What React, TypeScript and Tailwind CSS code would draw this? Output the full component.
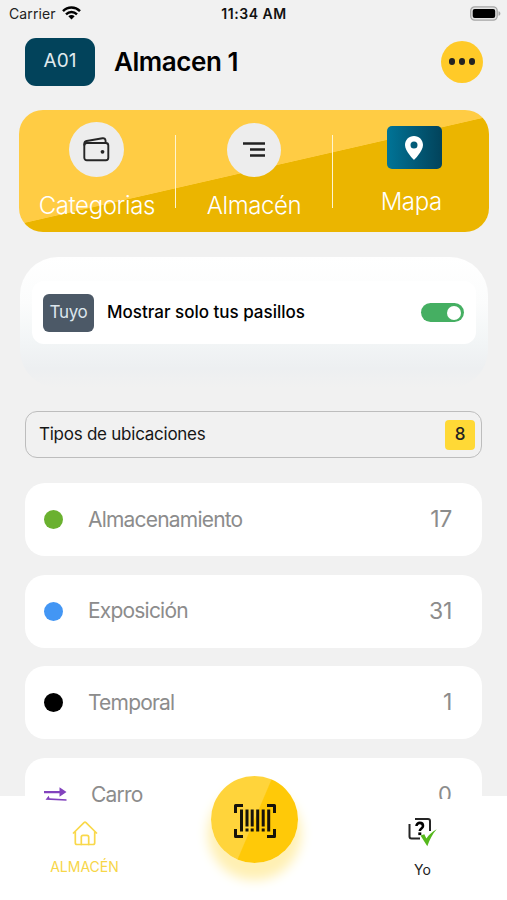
import type { ReactNode } from "react";

type LocationType = {
  name: string;
  count: number;
  color: string;
};

const LOCATION_TYPES: LocationType[] = [
  { name: "Almacenamiento", count: 17, color: "bg-[#6ab12f]" },
  { name: "Exposición", count: 31, color: "bg-[#4396f4]" },
  { name: "Temporal", count: 1, color: "bg-black" },
];

function StatusBar() {
  return (
    <div className="grid h-[26px] grid-cols-3 items-center pl-[9px] pr-[6px] text-[14px] text-[#222]">
      <div className="flex items-center gap-[6px]">
        <span className="tracking-[0.1px]">Carrier</span>
        <svg className="-mt-[1px]" width="19" height="14" viewBox="0 0 19 14" fill="none" stroke="#000" strokeWidth="2.5">
          <path d="M1 5.1C5.8.4 13.200.4 18 5.100" />
          <path d="M4 8.300c3.200-3 7.800-3 11 0" />
          <path d="M9.500 13.500 6.300 10.300c1.800-1.700 4.600-1.700 6.400 0z" fill="#000" stroke="none" />
        </svg>
      </div>
      <span className="-ml-[2px] text-center font-semibold tracking-[0.55px] text-[#111]">11:34 AM</span>
      <svg className="justify-self-end" width="31" height="15" viewBox="0 0 31 15">
        <rect x="0.700" y="0.900" width="26.500" height="13.200" rx="4" fill="#e4e4e4" stroke="#a5a5a5" strokeWidth="1.300" />
        <rect x="2.700" y="2.900" width="22.500" height="9.200" rx="2" fill="#000" />
        <path d="M28.500 5.200c2.500.7 2.500 3.900 0 4.600z" fill="#a5a5a5" />
      </svg>
    </div>
  );
}

function Header() {
  return (
    <header className="flex h-16 items-center px-[25px] pt-[7px]">
      <div className="flex h-12 w-[70px] items-center justify-center rounded-[11px] bg-[#02435b] text-[19px] text-[#e0eaee]">
        A01
      </div>
      <h1 className="ml-[19px] text-[26px] font-semibold tracking-[-0.45px] text-black">Almacen 1</h1>
      <button className="-mr-px ml-auto flex size-[42px] items-center justify-center gap-[3.500px] rounded-full bg-[#ffca28]" aria-label="Opciones">
        <span className="size-[6.500px] rounded-full bg-[#222]" />
        <span className="size-[6.500px] rounded-full bg-[#222]" />
        <span className="size-[6.500px] rounded-full bg-[#222]" />
      </button>
    </header>
  );
}

function Shortcut({ label, children }: { label: string; children: ReactNode }) {
  return (
    <div className="flex flex-1 flex-col items-center">
      {children}
      <span className="text-[24px] font-light leading-[30px] tracking-[-0.4px] text-white">{label}</span>
    </div>
  );
}

function Shortcuts() {
  return (
    <section className="mx-[19px] mt-5 flex h-[122px] w-[470px] rounded-[24px] bg-[linear-gradient(167.1deg,#ffcc44_49.600%,#ebb500_49.900%)]">
      <Shortcut label="Categorias">
        <div className="mb-[14px] mt-[12px] flex size-[55px] items-center justify-center rounded-full bg-[#ededed]">
          <svg width="27" height="25" viewBox="0 0 27 25" fill="none" stroke="#262626" strokeWidth="1.900" strokeLinejoin="round">
            <rect x="1.300" y="6" width="24" height="17.300" rx="2.500" />
            <path d="M1.300 8.500V7c0-1.500.9-2.700 2.300-3L19.500 1.300c1.700-.3 2.800.5 3 2L22.700 6" />
            <circle cx="19.500" cy="14.800" r="1.900" fill="#262626" stroke="none" />
          </svg>
        </div>
      </Shortcut>
      <div className="mt-[25px] h-[73px] w-[1.500px] bg-[#fff5cf]" />
      <Shortcut label="Almacén">
        <div className="mb-[14px] mt-[13px] flex size-[54px] items-center justify-center rounded-full bg-[#ededed]">
          <svg width="24" height="20" viewBox="0 0 24 20" stroke="#222" strokeWidth="2.300">
            <path d="M1 3.500h22M8 9.500h15M8 15.500h15" />
          </svg>
        </div>
      </Shortcut>
      <div className="mt-[25px] h-[73px] w-[1.500px] bg-[#fff5cf]" />
      <Shortcut label="Mapa">
        <div className="mb-[18px] ml-[6px] mt-4 flex h-[43px] w-[55px] items-center justify-center rounded-[5px] bg-linear-to-r from-[#007497] to-[#02435b]">
          <svg width="20" height="26" viewBox="0 0 20 26" fill="#fff">
            <path fillRule="evenodd" d="M10 1C4.900 1 1 4.900 1 10c0 6.200 9 15 9 15s9-8.800 9-15c0-5.100-3.900-9-9-9Zm0 5.500a3.500 3.500 0 1 1 0 7 3.500 3.500 0 0 1 0-7Z" />
          </svg>
        </div>
      </Shortcut>
    </section>
  );
}

function AisleFilter() {
  return (
    <section className="mx-5 mt-[25px] h-[131px] w-[468px] rounded-[38px] bg-[linear-gradient(180deg,#fff_0%,#fbfcfc_35%,#f2f5f6_65%,#edeff1_85%,#f1f1f1_100%)] px-3 pt-6">
      <div className="flex h-[63px] items-center rounded-[12px] bg-white pl-[11px] pr-3">
        <div className="flex h-[38px] w-[51px] items-center justify-center rounded-[6px] bg-[#4c5967] pt-px text-[17px] tracking-[-0.3px] text-[#dce5ed]">
          Tuyo
        </div>
        <span className="ml-[13px] pt-px text-[17px] font-medium text-black">Mostrar solo tus pasillos</span>
        <div className="ml-auto flex h-[19px] w-[43px] items-center justify-end rounded-full bg-[#45af62] pr-[3px]">
          <div className="size-[14px] rounded-full bg-white" />
        </div>
      </div>
    </section>
  );
}

function LocationList() {
  return (
    <section className="px-[25px]">
      <div className="mt-[23px] flex h-[47px] w-[457px] items-center justify-between rounded-[12px] border border-[#bdbdbd] pl-[13px] pr-[6px]">
        <span className="pt-px text-[17px] tracking-[-0.25px] text-[#161616]">Tipos de ubicaciones</span>
        <span className="flex size-[30px] items-center justify-center rounded-[4px] bg-[#ffd936] pt-px text-[17px] font-medium text-[#222]">8</span>
      </div>
      <ul className="mt-[25px] flex w-[457px] flex-col gap-[18.500px]">
        {LOCATION_TYPES.map((type) => (
          <li key={type.name} className="flex h-[73px] items-center rounded-[20px] bg-white pl-[19px] pr-[30px] text-[21px] text-[#8c8c8c]">
            <span className={`mr-[25px] size-[19px] rounded-full ${type.color}`} />
            <span className="tracking-[-0.8px]">{type.name}</span>
            <span className="ml-auto text-[23px] tracking-[-0.3px]">{type.count}</span>
          </li>
        ))}
        <li className="flex h-[73px] items-center rounded-[20px] bg-white pl-[19px] pr-[30px] text-[21px] text-[#8c8c8c]">
          <svg className="relative z-10 mr-[24px]" width="23" height="15" viewBox="0 0 23 15" fill="#8242bd">
            <path d="M0 4.100h15.500V.3L22.500 5l-7 4.700V6.200H0z" />
            <path d="M1.500 12.700 4.700 8.800l.8 2.500 17 1v1.500L1.500 12.700z" />
          </svg>
          <span className="relative z-10 pt-px tracking-[-0.8px]">Carro</span>
          <span className="relative z-10 ml-auto text-[22px] leading-8 [clip-path:inset(0_0_11px_0)]">0</span>
        </li>
      </ul>
    </section>
  );
}

function HomeIcon() {
  return (
    <svg width="26" height="25" viewBox="0 0 26 25" fill="none" stroke="#f9d84a" strokeWidth="1.700" strokeLinecap="round" strokeLinejoin="round">
      <path d="M1.500 12 12 1.700c.6-.6 1.400-.6 2 0L24.500 12M3.300 10.500v11.200c0 1 .7 1.800 1.700 1.800h16c1 0 1.700-.8 1.700-1.800V10.500" />
      <path d="M9.300 23.500V16c0-1 .7-1.700 1.700-1.700h4c1 0 1.700.7 1.700 1.700v7.500" />
    </svg>
  );
}

function BarcodeIcon() {
  return (
    <svg width="42" height="34" viewBox="0 0 42 34" fill="none" stroke="#17130a" strokeWidth="3">
      <path d="M1.500 9V1.500H9M33 1.500h7.500V9M40.500 25v7.500H33M9 32.500H1.500V25" strokeLinejoin="round" />
      <path d="M7.500 5.500v22M13 5.500v17M18.200 5.500v17M23.700 5.500v22M29.200 5.500v17M34.700 5.500v22" />
      <path d="M13 24.500v3M18.200 24.500v3M29.200 24.500v3" />
    </svg>
  );
}

function ProfileIcon() {
  return (
    <svg width="29" height="30" viewBox="0 0 29 30" fill="none">
      <path d="M7 2h13c1.100 0 2 .9 2 2v10M1.500 7v12.500c0 1.100.9 2 2 2H12" stroke="#252525" strokeWidth="2" />
      <path d="M8.500 9C8.500 4.800 15 4.900 15 9c0 2.500-3.200 2.400-3.200 5" stroke="#000" strokeWidth="2.600" />
      <path d="M10.300 15.400h3v2.700h-3z" fill="#000" />
      <path d="M12.500 18.500 16.300 17.300l2.100 4.200C21 17.500 24 15 28.700 12.200c-4.500 5-7 10.500-9.400 17z" fill="#55b81c" />
    </svg>
  );
}

function BottomNav() {
  return (
    <nav className="absolute inset-x-0 bottom-0 flex h-[104px] bg-white">
      <button className="flex w-[169px] flex-col items-center pt-[25px] text-[14px] text-[#f7d648]">
        <HomeIcon />
        <span className="mt-[11px] leading-5">ALMACÉN</span>
      </button>
      <div className="flex w-[169px] justify-center">
        <button className="-mt-5 ml-px flex size-[87px] items-center justify-center rounded-full bg-[linear-gradient(113deg,#ffd43b_49.500%,#ffc908_50.500%)] pl-px pt-[2px] shadow-[0_14px_12px_3px_#fff0b3]" aria-label="Escanear">
          <BarcodeIcon />
        </button>
      </div>
      <button className="flex w-[169px] flex-col items-center pt-[21px] text-[14px] text-[#222]">
        <ProfileIcon />
        <span className="mt-[13px] leading-5">Yo</span>
      </button>
    </nav>
  );
}

export default function App() {
  return (
    <div className="relative h-[900px] w-[507px] overflow-hidden bg-[#f1f1f1] font-[Inter,'Liberation_Sans',sans-serif]">
      <StatusBar />
      <Header />
      <Shortcuts />
      <AisleFilter />
      <LocationList />
      <BottomNav />
    </div>
  );
}
